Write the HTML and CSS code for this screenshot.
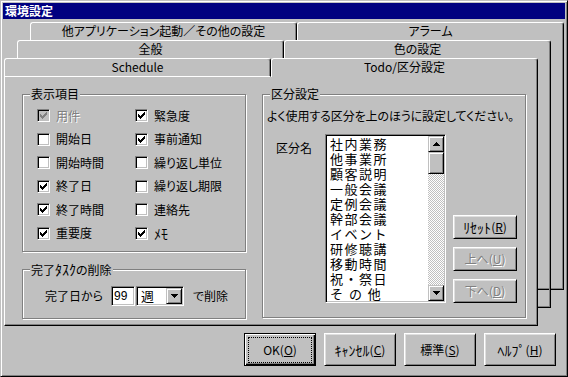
FILE: index.html
```html
<!DOCTYPE html>
<html lang="ja">
<head>
<meta charset="utf-8">
<title>環境設定</title>
<link rel="stylesheet" href="styles.css">
</head>
<body>
<div class="window">
  <div class="titlebar"><span class="title">環境設定</span></div>
  <div class="client">
    <div class="stack">
      <div class="layer l1">
        <div class="tabs">
          <div class="tab back">他アプリケーション起動／その他の設定</div>
          <div class="tab back">アラーム</div>
        </div>
        <div class="back-body"></div>
      </div>
      <div class="layer l2">
        <div class="tabs">
          <div class="tab back">全般</div>
          <div class="tab back">色の設定</div>
        </div>
        <div class="back-body"></div>
      </div>
      <div class="layer l3">
        <div class="tabs">
          <div class="tab front">Schedule</div>
          <div class="tab selected">Todo/区分設定</div>
        </div>
        <div class="page">
          <div class="leftcol">
            <div class="group g-items">
              <span class="group-title">表示項目</span>
              <div class="checks">
                <div class="cb"><span class="box dis"><svg class="chk" width="7" height="7" viewBox="0 0 7 7"><path d="M6 0h1v1h-1zM5 1h2v1h-2zM0 2h1v1h-1zM4 2h3v1h-3zM0 3h2v1h-2zM3 3h3v1h-3zM0 4h5v1h-5zM1 5h3v1h-3zM2 6h1v1h-1z"/></svg></span><span class="lbl dis">用件</span></div>
                <div class="cb"><span class="box"><svg class="chk" width="7" height="7" viewBox="0 0 7 7"><path d="M6 0h1v1h-1zM5 1h2v1h-2zM0 2h1v1h-1zM4 2h3v1h-3zM0 3h2v1h-2zM3 3h3v1h-3zM0 4h5v1h-5zM1 5h3v1h-3zM2 6h1v1h-1z"/></svg></span><span class="lbl">緊急度</span></div>
                <div class="cb"><span class="box"></span><span class="lbl">開始日</span></div>
                <div class="cb"><span class="box"><svg class="chk" width="7" height="7" viewBox="0 0 7 7"><path d="M6 0h1v1h-1zM5 1h2v1h-2zM0 2h1v1h-1zM4 2h3v1h-3zM0 3h2v1h-2zM3 3h3v1h-3zM0 4h5v1h-5zM1 5h3v1h-3zM2 6h1v1h-1z"/></svg></span><span class="lbl">事前通知</span></div>
                <div class="cb"><span class="box"></span><span class="lbl">開始時間</span></div>
                <div class="cb"><span class="box"></span><span class="lbl">繰り返し単位</span></div>
                <div class="cb"><span class="box"><svg class="chk" width="7" height="7" viewBox="0 0 7 7"><path d="M6 0h1v1h-1zM5 1h2v1h-2zM0 2h1v1h-1zM4 2h3v1h-3zM0 3h2v1h-2zM3 3h3v1h-3zM0 4h5v1h-5zM1 5h3v1h-3zM2 6h1v1h-1z"/></svg></span><span class="lbl">終了日</span></div>
                <div class="cb"><span class="box"></span><span class="lbl">繰り返し期限</span></div>
                <div class="cb"><span class="box"><svg class="chk" width="7" height="7" viewBox="0 0 7 7"><path d="M6 0h1v1h-1zM5 1h2v1h-2zM0 2h1v1h-1zM4 2h3v1h-3zM0 3h2v1h-2zM3 3h3v1h-3zM0 4h5v1h-5zM1 5h3v1h-3zM2 6h1v1h-1z"/></svg></span><span class="lbl">終了時間</span></div>
                <div class="cb"><span class="box"></span><span class="lbl">連絡先</span></div>
                <div class="cb"><span class="box"><svg class="chk" width="7" height="7" viewBox="0 0 7 7"><path d="M6 0h1v1h-1zM5 1h2v1h-2zM0 2h1v1h-1zM4 2h3v1h-3zM0 3h2v1h-2zM3 3h3v1h-3zM0 4h5v1h-5zM1 5h3v1h-3zM2 6h1v1h-1z"/></svg></span><span class="lbl">重要度</span></div>
                <div class="cb"><span class="box"><svg class="chk" width="7" height="7" viewBox="0 0 7 7"><path d="M6 0h1v1h-1zM5 1h2v1h-2zM0 2h1v1h-1zM4 2h3v1h-3zM0 3h2v1h-2zM3 3h3v1h-3zM0 4h5v1h-5zM1 5h3v1h-3zM2 6h1v1h-1z"/></svg></span><span class="lbl hw">ﾒﾓ</span></div>
              </div>
            </div>
            <div class="group g-del">
              <span class="group-title">完了<span class="hw">ﾀｽｸ</span>の削除</span>
              <div class="delrow">
                <span class="txt">完了日から</span>
                <span class="edit">99</span>
                <span class="combo"><span class="combo-text">週</span><span class="dropbtn"><svg width="7" height="4" viewBox="0 0 7 4"><path d="M0 0h7v1h-7zM1 1h5v1h-5zM2 2h3v1h-3zM3 3h1v1h-1z"/></svg></span></span>
                <span class="txt after">で削除</span>
              </div>
            </div>
          </div>
          <div class="group g-kubun">
            <span class="group-title">区分設定</span>
            <p class="desc">よく使用する区分を上のほうに設定してください。</p>
            <div class="kubun-row">
              <span class="kubun-label">区分名</span>
              <div class="listbox">
                <div class="items">
                  <div class="item">社内業務</div>
                  <div class="item">他事業所</div>
                  <div class="item">顧客説明</div>
                  <div class="item">一般会議</div>
                  <div class="item">定例会議</div>
                  <div class="item">幹部会議</div>
                  <div class="item">イベント</div>
                  <div class="item">研修聴講</div>
                  <div class="item">移動時間</div>
                  <div class="item">祝・祭日</div>
                  <div class="item">そ の 他</div>
                </div>
                <div class="scrollbar">
                  <span class="sbtn"><svg width="7" height="4" viewBox="0 0 7 4"><path d="M3 0h1v1h-1zM2 1h3v1h-3zM1 2h5v1h-5zM0 3h7v1h-7z"/></svg></span>
                  <span class="thumb"></span>
                  <span class="track"></span>
                  <span class="sbtn"><svg width="7" height="4" viewBox="0 0 7 4"><path d="M0 0h7v1h-7zM1 1h5v1h-5zM2 2h3v1h-3zM3 3h1v1h-1z"/></svg></span>
                </div>
              </div>
              <div class="sidebtns">
                <span class="btn small"><span class="hw">ﾘｾｯﾄ</span>(<u>R</u>)</span>
                <span class="btn small disabled">上へ(<u>U</u>)</span>
                <span class="btn small disabled">下へ(<u>D</u>)</span>
              </div>
            </div>
          </div>
        </div>
      </div>
    </div>
    <div class="buttons">
      <span class="btn default"><span class="focus">OK(<u>O</u>)</span></span>
      <span class="btn"><span class="hw">ｷｬﾝｾﾙ</span>(<u>C</u>)</span>
      <span class="btn">標準(<u>S</u>)</span>
      <span class="btn"><span class="hw">ﾍﾙﾌﾟ</span>(<u>H</u>)</span>
    </div>
  </div>
</div>
</body>
</html>
```

FILE: styles.css
```css
* { box-sizing: border-box; margin: 0; padding: 0; }

body {
  margin: 0;
  background: #c0c0c0;
  font-family: "Noto Sans CJK JP", "Noto Sans", sans-serif;
  font-size: 12px;
  color: #000;
  font-feature-settings: "palt";
}

.hw {
  font-feature-settings: normal;
  font-size: 14px;
  line-height: 14px;
}

.window {
  width: 568px;
  height: 377px;
  background: #c0c0c0;
  border: 1px solid;
  border-color: #c0c0c0 #000 #000 #c0c0c0;
  box-shadow: inset 1px 1px #fff, inset -1px -1px #808080;
  padding: 2px;
  display: flex;
  flex-direction: column;
}

.titlebar {
  height: 16px;
  background: #000080;
  color: #fff;
  display: flex;
  align-items: center;
  padding-left: 2px;
}

.title {
  font-weight: bold;
  font-size: 12px;
  line-height: 16px;
}

.client {
  display: flex;
  flex-direction: column;
  padding: 3px 0 0 1px;
}

/* stacked tab pages */
.stack {
  display: grid;
  grid-template-columns: 560px;
}

.layer {
  grid-area: 1 / 1;
  width: 534px;
  display: flex;
  flex-direction: column;
}

.l1 { margin-left: 26px; }
.l2 { margin-left: 13px; margin-top: 18px; }
.l3 { margin-top: 36px; }

.tabs {
  display: flex;
  height: 19px;
}

.tab {
  flex: 1 1 0;
  border: 1px solid #fff;
  border-right-color: #000;
  border-bottom: none;
  border-radius: 3px 3px 0 0;
  box-shadow: inset -1px 0 #808080;
  text-align: center;
  line-height: 16px;
  white-space: nowrap;
  background: #c0c0c0;
}

.tab.front {
  border-bottom: 1px solid #fff;
  border-bottom-right-radius: 0;
}

.back-body {
  height: 249px;
  border-right: 1px solid #000;
  border-bottom: 1px solid #000;
  box-shadow: inset -1px -1px #808080;
}

.page {
  height: 249px;
  background: #c0c0c0;
  border-left: 1px solid #fff;
  border-right: 1px solid #000;
  border-bottom: 1px solid #000;
  box-shadow: inset -1px -1px #808080;
  display: flex;
  padding: 17px 0 0 17px;
}

.leftcol {
  display: flex;
  flex-direction: column;
  gap: 17px;
}

/* group boxes */
.group {
  position: relative;
  border: 1px solid #808080;
  box-shadow: 1px 1px 0 #fff, inset 1px 1px 0 #fff;
}

.group-title {
  position: absolute;
  top: -8px;
  left: 7px;
  padding: 0 1px;
  background: #c0c0c0;
  line-height: 14px;
  white-space: nowrap;
}

.g-items { width: 224px; height: 158px; }
.g-del { width: 224px; height: 50px; }
.g-kubun {
  width: 264px;
  height: 224px;
  margin-left: 16px;
  padding: 14px 0 0 3px;
}

/* checkboxes */
.checks {
  display: grid;
  grid-template-columns: 98px auto;
  grid-auto-rows: 13px;
  row-gap: 10.6px;
  padding: 14px 0 0 14px;
}

.cb {
  display: flex;
  align-items: center;
  gap: 6px;
  height: 13px;
}

.box {
  width: 13px;
  height: 13px;
  flex: none;
  background: #fff;
  border: 1px solid;
  border-color: #808080 #fff #fff #808080;
  box-shadow: inset 1px 1px #000, inset -1px -1px #c0c0c0;
  display: flex;
  align-items: center;
  justify-content: center;
}

.box.dis { background: #c0c0c0; }
.box.dis .chk { fill: #808080; }

.chk { display: block; shape-rendering: crispEdges; fill: #000; }

.lbl { line-height: 14px; white-space: nowrap; }
.lbl.dis { color: #808080; text-shadow: 1px 1px 0 #fff; }

/* delete row */
.delrow {
  display: flex;
  align-items: center;
  padding: 16px 0 0 22px;
}

.txt { line-height: 14px; white-space: nowrap; }
.txt.after { margin-left: 9px; }

.edit {
  width: 24px;
  height: 20px;
  margin-left: 8px;
  background: #fff;
  border: 1px solid;
  border-color: #808080 #fff #fff #808080;
  box-shadow: inset 1px 1px #000, inset -1px -1px #c0c0c0;
  padding: 1px 0 0 2px;
  line-height: 16px;
  font-family: "Liberation Sans", sans-serif;
  font-size: 12px;
}

.combo {
  width: 48px;
  height: 20px;
  margin-left: 1px;
  background: #fff;
  border: 1px solid;
  border-color: #808080 #fff #fff #808080;
  box-shadow: inset 1px 1px #000, inset -1px -1px #c0c0c0;
  padding: 1px;
  display: flex;
}

.combo-text {
  flex: 1;
  padding-left: 3px;
  line-height: 16px;
  font-size: 13px;
}

.dropbtn, .sbtn {
  width: 16px;
  height: 16px;
  flex: none;
  background: #c0c0c0;
  border: 1px solid;
  border-color: #c0c0c0 #000 #000 #c0c0c0;
  box-shadow: inset 1px 1px #fff, inset -1px -1px #808080;
  display: flex;
  align-items: center;
  justify-content: center;
}

.dropbtn svg, .sbtn svg { display: block; shape-rendering: crispEdges; fill: #000; }

/* kubun */
.desc {
  line-height: 14px;
  white-space: nowrap;
  letter-spacing: -0.1px;
  padding-left: 1px;
}

.kubun-row {
  display: flex;
  margin-top: 11px;
}

.kubun-label {
  width: 59px;
  padding: 7px 0 0 10px;
  line-height: 14px;
}

.listbox {
  width: 121px;
  height: 169px;
  background: #fff;
  border: 1px solid;
  border-color: #808080 #fff #fff #808080;
  box-shadow: inset 1px 1px #000, inset -1px -1px #c0c0c0;
  padding: 1px;
  display: flex;
}

.items {
  flex: 1;
  font-size: 13px;
  line-height: 15px;
  letter-spacing: 1.5px;
  padding: 0 0 0 3px;
  font-feature-settings: normal;
  overflow: hidden;
}

.item { white-space: pre; height: 15px; }

.scrollbar {
  width: 16px;
  display: flex;
  flex-direction: column;
  background: conic-gradient(#fff 25%, #c0c0c0 0 50%, #fff 0 75%, #c0c0c0 0) 0 0 / 2px 2px;
}

.thumb {
  height: 22px;
  background: #c0c0c0;
  border: 1px solid;
  border-color: #c0c0c0 #000 #000 #c0c0c0;
  box-shadow: inset 1px 1px #fff, inset -1px -1px #808080;
}

.track { flex: 1; }

.sidebtns {
  display: flex;
  flex-direction: column;
  gap: 8px;
  align-self: flex-end;
  margin-left: 7px;
}

/* buttons */
.btn {
  width: 72px;
  height: 33px;
  background: #c0c0c0;
  border: 1px solid;
  border-color: #fff #000 #000 #fff;
  box-shadow: inset 1px 1px #dfdfdf, inset -1px -1px #808080;
  display: flex;
  align-items: center;
  justify-content: center;
  line-height: 14px;
  white-space: nowrap;
}

.btn.small { width: 64px; height: 24px; }

.btn.disabled { color: #808080; text-shadow: 1px 1px 0 #fff; }

.btn u { text-underline-offset: 1px; }

.buttons {
  display: flex;
  gap: 8px;
  margin: 7px 0 0 240px;
}

.btn.default {
  border: 1px solid #000;
  box-shadow: inset 1px 1px #fff, inset -1px -1px #000, inset -2px -2px #808080;
}

.focus {
  width: 64px;
  height: 26px;
  border: 1px dotted #000;
  display: flex;
  align-items: center;
  justify-content: center;
}
```
